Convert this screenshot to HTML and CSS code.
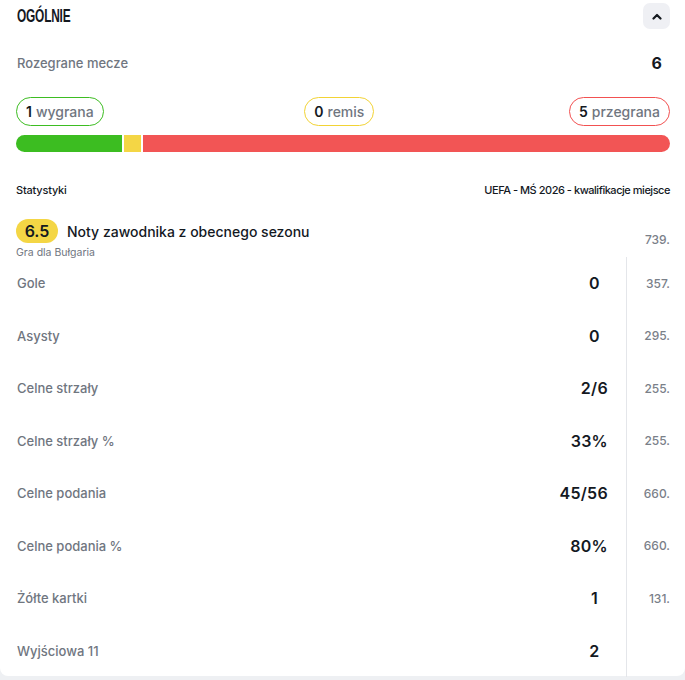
FILE: index.html
```html
<!DOCTYPE html>
<html lang="pl">
<head>
<meta charset="utf-8">
<link rel="stylesheet" href="styles.css">
</head>
<body>
<div class="card">
  <div class="header">
    <h2 class="title"><span class="title-text">OGÓLNIE</span></h2>
    <button class="toggle" aria-label="Zwiń">
      <svg width="10" height="7" viewBox="0 0 10 7"><path d="M1.5 5.5 L5 2 L8.5 5.5" fill="none" stroke="#14191f" stroke-width="2.2" stroke-linecap="round" stroke-linejoin="round"/></svg>
    </button>
  </div>

  <div class="matches">
    <span class="label">Rozegrane mecze</span>
    <span class="count">6</span>
  </div>

  <div class="pills">
    <span class="pill win"><b>1</b> wygrana</span>
    <span class="pill draw"><b>0</b> remis</span>
    <span class="pill loss"><b>5</b> przegrana</span>
  </div>

  <div class="bar">
    <span class="seg g" style="width:106px"></span>
    <span class="seg y" style="width:17px"></span>
    <span class="seg r"></span>
  </div>

  <div class="stats-head">
    <span>Statystyki</span>
    <span class="comp">UEFA - MŚ 2026 - kwalifikacje miejsce</span>
  </div>

  <div class="rating">
    <div class="rating-main">
      <div class="rating-top">
        <span class="badge">6.5</span>
        <span class="rating-title">Noty zawodnika z obecnego sezonu</span>
      </div>
      <div class="rating-sub">Gra dla Bułgaria</div>
    </div>
    <div class="rank rating-rank">739.</div>
  </div>

  <div class="rows">
    <div class="row"><span class="name">Gole</span><span class="val">0</span><span class="rank">357.</span></div>
    <div class="row"><span class="name">Asysty</span><span class="val">0</span><span class="rank">295.</span></div>
    <div class="row"><span class="name">Celne strzały</span><span class="val">2/6</span><span class="rank">255.</span></div>
    <div class="row"><span class="name">Celne strzały %</span><span class="val">33%</span><span class="rank">255.</span></div>
    <div class="row"><span class="name">Celne podania</span><span class="val">45/56</span><span class="rank">660.</span></div>
    <div class="row"><span class="name">Celne podania %</span><span class="val">80%</span><span class="rank">660.</span></div>
    <div class="row"><span class="name">Żółte kartki</span><span class="val">1</span><span class="rank">131.</span></div>
    <div class="row"><span class="name">Wyjściowa 11</span><span class="val">2</span><span class="rank"></span></div>
  </div>
</div>
</body>
</html>
```

FILE: styles.css
```css
* { box-sizing: border-box; }
html, body { margin: 0; padding: 0; }
body {
  background: #eef0f3;
  font-family: Inter, "Noto Sans", sans-serif;
  color: #14191f;
  width: 685px;
  height: 680px;
  overflow: hidden;
}
.card {
  background: #fff;
  height: 676px;
  border-radius: 0 0 8px 8px;
  padding: 0 15px 0 16px;
}
.header {
  height: 32px;
  display: flex;
  align-items: center;
  justify-content: space-between;
}
.title {
  margin: 0;
  padding-left: 1px;
  font-family: "Liberation Sans", "DejaVu Sans", sans-serif;
  font-weight: 700;
  font-size: 18px;
  line-height: 20px;
}
.title-text {
  display: inline-block;
  transform: scaleX(0.66);
  transform-origin: left center;
  letter-spacing: -0.3px;
}
.toggle {
  width: 27px;
  height: 26px;
  border: none;
  border-radius: 7px;
  background: #eff0f4;
  display: flex;
  align-items: center;
  justify-content: center;
  padding: 0;
}
.matches {
  margin-top: 21px;
  height: 20px;
  display: flex;
  align-items: center;
  justify-content: space-between;
}
.label {
  font-size: 13px;
  color: #70767f;
  font-weight: 500;
  padding-left: 1px;
}
.count {
  font-size: 16px;
  font-weight: 700;
  padding-right: 8px;
}
.pills {
  margin-top: 24px;
  display: flex;
  justify-content: space-between;
}
.pill {
  height: 29px;
  border-radius: 15px;
  border: 1px solid;
  padding: 0 9px;
  display: flex;
  align-items: center;
  gap: 4px;
  font-size: 14px;
  font-weight: 500;
  color: #70767f;
}
.pill b { color: #14191f; font-weight: 600; }
.pill.win { border-color: #3dbd22; }
.pill.draw { border-color: #f2d335; margin-left: 6px; }
.pill.loss { border-color: #f25151; }
.bar {
  margin-top: 9px;
  height: 17px;
  display: flex;
  gap: 2px;
  border-radius: 9px;
  overflow: hidden;
}
.seg { display: block; height: 100%; }
.seg.g { background: #3cbd21; }
.seg.y { background: #f4d645; }
.seg.r { background: #f25555; flex: 1; }
.stats-head {
  margin-top: 31px;
  height: 14px;
  display: flex;
  justify-content: space-between;
  align-items: center;
  font-size: 11px;
  font-weight: 500;
  letter-spacing: -0.2px;
}
.stats-head .comp { letter-spacing: -0.47px; }
.rating {
  margin-top: 22px;
  height: 38px;
  display: flex;
  justify-content: space-between;
}
.rating-top {
  display: flex;
  align-items: center;
  gap: 9px;
}
.badge {
  background: #f4d645;
  border-radius: 12px;
  height: 24px;
  width: 42px;
  display: flex;
  align-items: center;
  justify-content: center;
  font-size: 16px;
  font-weight: 600;
}
.rating-title {
  font-size: 14px;
  font-weight: 500;
}
.rating-sub {
  margin-top: 4px;
  font-size: 10.5px;
  color: #70767f;
  line-height: 12px;
}
.rank {
  width: 44px;
  text-align: right;
  font-size: 12px;
  font-weight: 500;
  color: #7a8089;
}
.rating-rank {
  padding-top: 13px;
}
.rows {
  display: flex;
  flex-direction: column;
}
.row {
  height: 52.5px;
  display: flex;
  align-items: center;
}
.name {
  flex: 1;
  font-size: 13px;
  font-weight: 500;
  color: #70767f;
  padding-left: 1px;
}
.val {
  font-size: 16px;
  font-weight: 600;
  letter-spacing: 0.3px;
  min-width: 27px;
  text-align: center;
  margin-right: 18px;
}
.row .rank {
  align-self: stretch;
  display: flex;
  align-items: center;
  justify-content: flex-end;
  border-left: 1px solid #e4e6ea;
}
```
